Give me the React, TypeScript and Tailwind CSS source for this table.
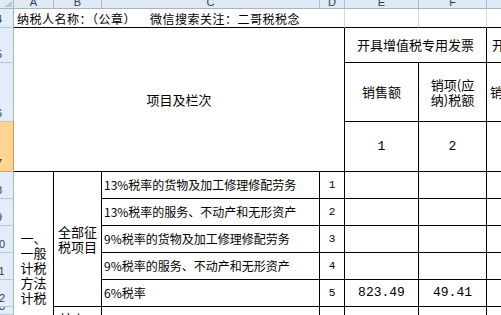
import React from 'react';

const letters = [
  { l: 'A', w: 'w-[40px]' },
  { l: 'B', w: 'w-[48px]' },
  { l: 'C', w: 'w-[218px]' },
  { l: 'D', w: 'w-[25px]' },
  { l: 'E', w: 'w-[74px]' },
  { l: 'F', w: 'w-[68px]' },
];

const rowHeads = [
  { n: '4', h: 'h-[19px]' },
  { n: '5', h: 'h-[35px]' },
  { n: '6', h: 'h-[59px]' },
  { n: '7', h: 'h-[50px]', active: true },
  { n: '8', h: 'h-[27px]' },
  { n: '9', h: 'h-[27px]' },
  { n: '10', h: 'h-[27px]' },
  { n: '11', h: 'h-[27px]' },
  { n: '12', h: 'h-[27px]' },
  { n: '13', h: 'flex-1' },
];

const rowStart = ['row-start-5', 'row-start-6', 'row-start-7', 'row-start-8', 'row-start-9'];

const items = [
  { label: '13%税率的货物及加工修理修配劳务', no: '1', e: '', f: '' },
  { label: '13%税率的服务、不动产和无形资产', no: '2', e: '', f: '' },
  { label: '9%税率的货物及加工修理修配劳务', no: '3', e: '', f: '' },
  { label: '9%税率的服务、不动产和无形资产', no: '4', e: '', f: '' },
  { label: '6%税率', no: '5', e: '823.49', f: '49.41' },
];

const mono = "font-['Liberation_Mono',monospace]";

function ColHeader() {
  return (
    <div className="flex h-[9px] shrink-0 bg-[#e1e9f5] border-b border-[#9eb6ce]">
      <div className="w-[14px] shrink-0 border-r border-[#9eb6ce] flex items-end justify-end">
        <svg width="8" height="6" viewBox="0 0 8 6" className="mb-[1px] mr-[1px]">
          <polygon points="8,0 8,6 0,6" fill="#b6c6da" />
        </svg>
      </div>
      {letters.map((c) => (
        <div
          key={c.l}
          className={`${c.w} shrink-0 border-r border-[#a9bcd4] flex items-end justify-center overflow-hidden`}
        >
          <span className="font-['Liberation_Sans',sans-serif] text-[11px] leading-[11px] text-[#2f3e55]">{c.l}</span>
        </div>
      ))}
      <div className="flex-1" />
    </div>
  );
}

function RowHeader() {
  return (
    <div className="w-[14px] shrink-0 flex flex-col bg-[#e4ecf7]">
      {rowHeads.map((r) => (
        <div
          key={r.n}
          className={`${r.h} overflow-hidden flex items-end border-b border-r ${
            r.active ? 'bg-[#ffd591] border-[#f29536]' : 'border-b-[#b7c8dc] border-r-[#9eb6ce]'
          }`}
        >
          <div className="w-[30px] ml-[-16px] shrink-0 text-center font-['Liberation_Sans',sans-serif] text-[11px] leading-[13px] pb-[1px] text-[#2f3e55]">
            {r.n}
          </div>
        </div>
      ))}
    </div>
  );
}

function Body() {
  return (
    <div className="grid flex-1 grid-cols-[40px_48px_218px_25px_74px_68px_1fr] grid-rows-[19px_35px_59px_50px_27px_27px_27px_27px_27px_1fr]">
      {/* title row */}
      <div className="col-start-1 col-span-3 row-start-1 border-b border-black flex items-end pl-[3px] pb-[1px] text-[12px] leading-[15px] tracking-[0.5px] whitespace-nowrap">
        <span>纳税人名称：（公章）</span>
        <span className="ml-[14px]">微信搜索关注：二哥税税念</span>
      </div>
      <div className="col-start-4 row-start-1 border-r border-b border-r-[#d0d7e5] border-b-black" />
      <div className="col-start-5 row-start-1 border-r border-b border-r-[#d0d7e5] border-b-black" />
      <div className="col-start-6 row-start-1 border-r border-b border-r-[#d0d7e5] border-b-black" />
      <div className="col-start-7 row-start-1 border-b border-black" />

      {/* header block */}
      <div className="col-start-1 col-span-4 row-start-2 row-span-3 border-r border-b border-black flex items-center justify-center text-[13px]">
        项目及栏次
      </div>
      <div className="col-start-5 col-span-2 row-start-2 border-r border-b border-black flex items-center justify-center text-[13px]">
        开具增值税专用发票
      </div>
      <div className="col-start-7 row-start-2 border-b border-black flex items-center pl-[5px] text-[13px] whitespace-nowrap overflow-hidden">
        开具其他发票
      </div>

      <div className="col-start-5 row-start-3 border-r border-b border-black flex items-center justify-center text-[13px]">
        销售额
      </div>
      <div className="col-start-6 row-start-3 border-r border-b border-black flex items-center justify-center text-center text-[13px] leading-[15px]">
        销项(应<br />纳)税额
      </div>
      <div className="col-start-7 row-start-3 border-b border-black flex items-center pl-[3px] text-[13px] whitespace-nowrap overflow-hidden">
        销售额
      </div>

      <div className={`col-start-5 row-start-4 border-r border-b border-black flex items-center justify-center text-[13px] ${mono}`}>
        1
      </div>
      <div className={`col-start-6 row-start-4 border-r border-b border-black flex items-center justify-center text-[13px] ${mono}`}>
        2
      </div>
      <div className="col-start-7 row-start-4 border-b border-black" />

      {/* left merged labels */}
      <div className="col-start-1 row-start-5 row-span-6 border-r border-black flex flex-col items-center pt-[58px] text-[13px] leading-[15px]">
        <span className="h-[15px]">一、</span>
        <span className="h-[15px]">一般</span>
        <span className="h-[15px]">计税</span>
        <span className="h-[15px]">方法</span>
        <span className="h-[15px]">计税</span>
      </div>
      <div className="col-start-2 row-start-5 row-span-5 border-r border-b border-black flex items-center justify-center text-center text-[13px] leading-[15px]">
        全部征<br />税项目
      </div>
      <div className="col-start-2 row-start-10 border-r border-black overflow-hidden pt-[4px] pl-[5px] text-[13px] leading-[15px]">
        其中：
      </div>

      {items.map((it, i) => (
        <React.Fragment key={it.no}>
          <div className={`col-start-3 ${rowStart[i]} border-r border-b border-black flex items-center pl-[2px] text-[12px] whitespace-nowrap overflow-hidden`}>
            {it.label}
          </div>
          <div className={`col-start-4 ${rowStart[i]} border-r border-b border-black flex items-center justify-center text-[11px] ${mono}`}>
            {it.no}
          </div>
          <div className={`col-start-5 ${rowStart[i]} border-r border-b border-black flex items-center justify-center text-[13px] ${mono}`}>
            {it.e}
          </div>
          <div className={`col-start-6 ${rowStart[i]} border-r border-b border-black flex items-center justify-center text-[13px] ${mono}`}>
            {it.f}
          </div>
          <div className={`col-start-7 ${rowStart[i]} border-b border-black`} />
        </React.Fragment>
      ))}

      <div className="col-start-3 row-start-10 border-r border-black" />
      <div className="col-start-4 row-start-10 border-r border-black" />
      <div className="col-start-5 row-start-10 border-r border-black" />
      <div className="col-start-6 row-start-10 border-r border-black" />
    </div>
  );
}

export default function App() {
  return (
    <div className="w-[501px] h-[315px] overflow-hidden bg-white text-black font-['Noto_Sans_CJK_SC',sans-serif] flex flex-col">
      <ColHeader />
      <div className="flex flex-1 min-h-0">
        <RowHeader />
        <Body />
      </div>
    </div>
  );
}
